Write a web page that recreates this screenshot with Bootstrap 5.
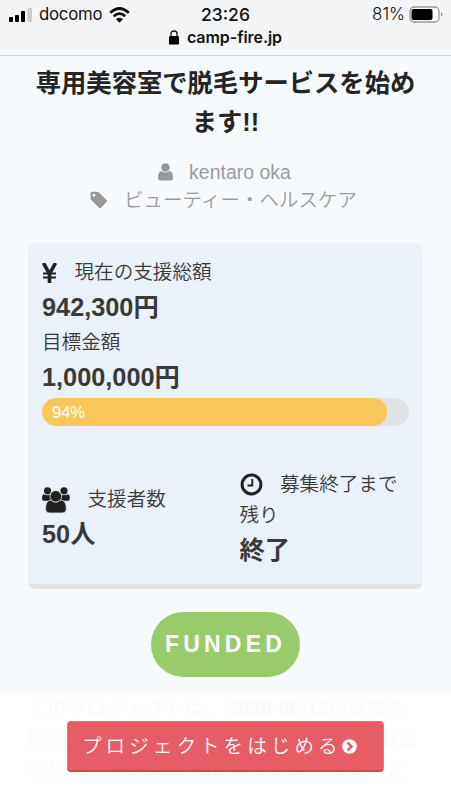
<!DOCTYPE html>
<html lang="ja">
<head>
<meta charset="utf-8">
<meta name="viewport" content="width=device-width, initial-scale=1">
<title>camp-fire.jp</title>
<link href="https://cdn.jsdelivr.net/npm/bootstrap@5.3.0/dist/css/bootstrap.min.css" rel="stylesheet">
<style>
body{font-family:"Liberation Sans","Noto Sans CJK JP",sans-serif;font-size:19.5px;font-weight:350;color:#3a3a3a;background:#fff;height:800px;overflow:hidden}
svg{display:block;flex:none}
.status-bar{height:56px;background:#f4f5f6;border-bottom:1px solid #cfd2d5;font-family:Inter,sans-serif;color:#111;padding-top:3px}
.status-row{height:23px;line-height:23px;font-size:17px;display:grid;grid-template-columns:1fr auto 1fr}
.clock{font-weight:500;font-size:17.5px;letter-spacing:0}
.url{height:22px;line-height:22px;font-size:16px;font-weight:600;letter-spacing:-.05px}
.carrier{font-weight:400;font-size:16.8px;letter-spacing:-.25px;padding-left:2px}
.wifi{margin-left:7px}
.project{background:#f6fafd;height:637px;padding:8px 28px 0}
.project h1{font-size:25.3px;line-height:39px;font-weight:700;color:#252525;margin:0 0 16px}
.meta{height:28px;line-height:28px;color:#9c9c9c}
.author{padding-right:2px}
.icon-gap{margin-right:17.5px}
.stats{margin-top:29px;height:346px;background:#eaf1f9;border-radius:7px;border-bottom:5px solid #e1e3e6;padding:14px 14px 0}
.lbl{height:31px;line-height:31px;font-size:19.6px}
.val{font-size:25.3px;font-weight:700;height:39px;line-height:39px}
.track{height:28px;border-radius:14px;background:#e1e2e6;font-size:16.5px;margin-top:1px}
.track .progress-bar{background:#fac75a;border-radius:14px;padding-left:10px;color:#fff}
.ends{padding-top:43px}
.lower-left{padding-top:15px}
.lower-right{padding-left:14px}
.funded{width:149px;height:65px;border-radius:33px;background:#99cb6b;color:#fff;font-size:23px;font-weight:700;letter-spacing:4.2px;margin-top:23px}
.summary{height:107px;padding:0 28px;color:#fafafa;line-height:31px}
.summary div{height:31px}
.summary b{font-weight:700}
.start{left:67px;top:28px;width:317px;height:51px;background:#e65d65;border:1px solid #ea747b;border-bottom:2px solid #da424c;border-radius:4px;color:#fff;padding-left:14px;letter-spacing:4.1px}
.start:hover{color:#fff}
</style>
<script src="https://cdn.jsdelivr.net/npm/bootstrap@5.3.0/dist/js/bootstrap.bundle.min.js"></script>
</head>
<body>
<header class="status-bar">
  <div class="status-row">
    <div class="d-flex align-items-center">
      <svg class="ms-2" width="25" height="16" viewBox="0 0 25 16"><rect x="1" y="10" width="4" height="5" rx="1"/><rect x="7" y="8" width="4" height="7" rx="1"/><rect x="13" y="4" width="4" height="11" rx="1"/><rect x="19.500" y="1" width="4.500" height="14" rx="1" fill="#ccc"/></svg>
      <span class="carrier ms-1">docomo</span>
      <svg class="wifi" width="21" height="16" viewBox="0 0 21 16" fill="none" stroke="#111" stroke-width="2.700"><path d="M1.200 5.800Q10.500-2.800 19.800 5.800M4.700 9.300Q10.500 4 16.300 9.300"/><path d="M10.500 15.800 7 12.300Q10.500 9.400 14 12.300Z" fill="#111" stroke="none"/></svg>
    </div>
    <div class="clock">23:26</div>
    <div class="d-flex align-items-center justify-content-end pe-2">
      <span>81%</span>
      <svg class="ms-1" width="34" height="17" viewBox="0 0 34 17"><rect x="1" y="1" width="29" height="15" rx="4" fill="#fafafa" stroke="#999" stroke-width="1.300"/><rect x="2.500" y="3" width="21" height="11" rx="2"/><path d="M32 6q3 2.500 0 5z" fill="#999"/></svg>
    </div>
  </div>
  <div class="url d-flex justify-content-center align-items-center">
    <svg class="me-2" width="10" height="15" viewBox="0 0 10 15"><rect y="6" width="10" height="8.500" rx="1.300"/><path d="M2 7V4q0-3 3-3t3 3v3" fill="none" stroke="#111" stroke-width="1.300"/></svg><span>camp-fire.jp</span>
  </div>
</header>
<main class="project">
  <h1 class="text-center">専用美容室で脱毛サービスを始め<br>ます!!</h1>
  <div class="meta author d-flex justify-content-center align-items-center">
    <svg class="me-3" width="15" height="18" viewBox="0 0 15 18" fill="#999"><circle cx="7.500" cy="4.500" r="4.300"/><path d="M3.500 8Q7.500 11 11.500 8 15 8.500 15 15q0 2.500-2.500 2.500h-10Q0 17.500 0 15 0 8.500 3.500 8Z"/></svg>kentaro oka
  </div>
  <div class="meta d-flex justify-content-center align-items-center pe-1">
    <svg class="me-3" width="18" height="18" viewBox="0 0 18 18" fill="#999"><path fill-rule="evenodd" d="M.5 2.500Q.5.800 2.200.800H7q1.200 0 2 .8l7.500 7.500q1 1 0 2l-5.500 5.700q-1 1-2 0L1.400 9.200Q.5 8.300.5 7ZM4 2.800a1.500 1.500 0 1 0 .01 0Z"/></svg>ビューティー・ヘルスケア
  </div>
  <section class="stats">
    <div class="lbl d-flex align-items-center">
      <svg class="icon-gap" width="15" height="20" viewBox="0 0 15 20" fill="none" stroke="#222"><path d="M1.500 0 7.500 11 13.500 0M7.500 10V20" stroke-width="3.600"/><path d="M1 10.500H14M1 14.500H14" stroke-width="2.100"/></svg>現在の支援総額
    </div>
    <div class="val">942,300円</div>
    <div class="lbl">目標金額</div>
    <div class="val">1,000,000円</div>
    <div class="track progress"><div class="progress-bar text-start" style="width:94%">94%</div></div>
    <div class="row gx-0 ends">
      <div class="col-6 lower-left">
        <div class="lbl d-flex align-items-center">
          <svg class="icon-gap" width="28" height="26" viewBox="0 0 28 26" fill="#222" stroke="#eaf1f9"><g stroke="none"><circle cx="5.500" cy="3.800" r="3.600"/><circle cx="22" cy="3.800" r="3.600"/><path d="M1.500 7.300Q5.500 9 9 7.600L10 13.800H2Q0 13.800 0 12 0 8 1.500 7.300ZM26.300 7.300Q22 9 18.500 7.600L17.500 13.800H26q1.800 0 1.800-1.800 0-4-1.500-4.700Z"/></g><path d="M9 13Q13.800 17 18.500 13 24.500 13.500 24.300 22q0 4-4 4H7.500q-4 0-4-4Q3.500 13.500 9 13Z" stroke-width=".7"/><circle cx="13.800" cy="9.300" r="5.800" stroke-width=".8"/></svg>支援者数
        </div>
        <div class="val">50人</div>
      </div>
      <div class="col-6 lower-right">
        <div class="lbl d-flex align-items-center text-nowrap">
          <svg class="icon-gap" width="23" height="23" viewBox="0 0 23 23" fill="none" stroke="#222"><circle cx="11.500" cy="11.500" r="9.400" stroke-width="3"/><path d="M12.300 6V12.500H7.500" stroke-width="1.900"/></svg>募集終了まで
        </div>
        <div class="lbl">残り</div>
        <div class="val">終了</div>
      </div>
    </div>
  </section>
  <div class="funded d-flex align-items-center justify-content-center mx-auto">FUNDED</div>
</main>
<footer class="summary position-relative text-nowrap">
  <div>このプロジェクトは、 <b>2020-06-13</b>に募集を</div>
  <div>開始し、<b>50人</b>の支援により 942,300円の資金</div>
  <div>を集め、 <b>2020-07-10</b>に募集を終了しました</div>
  <a class="start position-absolute d-flex align-items-center text-decoration-none" href="#">プロジェクトをはじめる<svg width="15" height="15" viewBox="0 0 15 15"><circle cx="7.500" cy="7.500" r="7.300" fill="#fff"/><path d="M5.500 3.500 9.500 7.500 5.500 11.500" fill="none" stroke="#e65d65" stroke-width="2.500"/></svg></a>
</footer>
</body>
</html>
